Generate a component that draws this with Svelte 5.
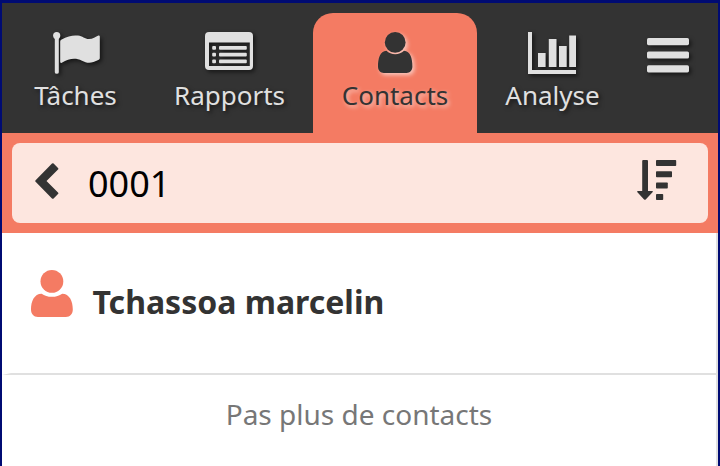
<script>
  const tabs = [
    { id: 'tasks', label: 'Tâches', width: 141 },
    { id: 'reports', label: 'Rapports', width: 167 },
    { id: 'contacts', label: 'Contacts', width: 164 },
    { id: 'stats', label: 'Analyse', width: 151 },
  ];
  let active = $state('contacts');
</script>

<div class="app">
  <nav>
    {#each tabs as tab}
      <button class="tab" class:active={active === tab.id} style="width: {tab.width}px" onclick={() => (active = tab.id)}>
        {#if tab.id === 'tasks'}
          <svg class="flag" width="47" height="42" viewBox="0 0 47 42">
            <circle cx="3.7" cy="3.6" r="3.6" />
            <path d="M1.8 4H5.8V40.3Q5.8 41.8 3.8 41.8T1.8 40.3Z" />
            <path d="M7.2 9.5Q7.2 8.4 8.2 7.8C15 4 20 3 25 3.6C29.5 4.2 32 7.2 36 7.1C39.5 7 43 4.5 45.4 3.5Q46.8 3.2 46.8 4.6V26.3Q46.8 27.2 45.8 27.8C38 31.9 34 31.3 29 28.7C22 25.2 16 26.6 8.8 30.7Q7.2 31.4 7.2 29.8Z" />
          </svg>
        {:else if tab.id === 'reports'}
          <svg class="list" width="48" height="42" viewBox="0 0 48 42">
            <path fill-rule="evenodd" d="M4 0H44Q48 0 48 4V34Q48 38 44 38H4Q0 38 0 34V4Q0 0 4 0ZM4 10.5V34H44.8V10.5Z" />
            {#each [14, 20.8, 27.5] as y}
              <rect x="7.2" {y} width="3.8" height="3.8" rx="1" />
              <rect x="14" {y} width="27.8" height="3.8" rx="1" />
            {/each}
          </svg>
        {:else if tab.id === 'contacts'}
          <svg width="34.4" height="42" viewBox="0 0 34.4 42">
            <circle cx="17.2" cy="10.4" r="10.4" />
            <path d="M8.4 18.8C10.7 21.1 13.8 22.3 17.2 22.3S23.7 21.1 26 18.8C32.4 19 34.4 26.5 34.4 34.6C34.4 38.5 31.8 41 28.6 41H5.8C2.6 41 0 38.5 0 34.6C0 26.5 2 19 8.4 18.8Z" />
          </svg>
        {:else}
          <svg class="chart" width="48" height="42" viewBox="0 0 48 42">
            <path d="M0 0H4V38H48V42H0ZM10 21H17.6V35H10ZM20.8 7H28.5V35H20.8ZM31 14H38.7V35H31ZM41.2 3.5H48V35H41.2Z" />
          </svg>
        {/if}
        <span>{tab.label}</span>
      </button>
    {/each}
    <button class="menu" aria-label="Menu">
      <svg width="42" height="35" viewBox="0 0 42 35">
        <rect width="42" height="7.2" rx="1.6" />
        <rect y="13.4" width="42" height="7.2" rx="1.6" />
        <rect y="27.2" width="42" height="7.2" rx="1.6" />
      </svg>
    </button>
  </nav>

  <header>
    <div class="search">
      <svg class="back" width="24" height="36" viewBox="0 0 24 36">
        <path d="M17 .6Q17.8-.2 18.6.6L23 4.9Q23.8 5.7 23 6.5L11.5 18L23 29.5Q23.8 30.3 23 31.1L18.6 35.4Q17.8 36.2 17 35.4L.6 18.8Q-.2 18 .6 17.2Z" />
      </svg>
      <span class="query">0001</span>
      <svg class="sort" width="40" height="41" viewBox="0 0 40 41">
        <path d="M6.2 0H10Q11 0 11 1V31H15.2Q16.5 31.2 15.5 32.3L8.7 39.4Q7.9 40.2 7.1 39.4L.4 32.3Q-.5 31.2 1 31H5.2V1Q5.2 0 6.2 0Z" />
        <rect x="19" y="0" width="20.2" height="6" rx=".8" />
        <rect x="19" y="11.3" width="16" height="6" rx=".8" />
        <rect x="19" y="22.5" width="11.8" height="6" rx=".8" />
        <rect x="19" y="34" width="7.2" height="6" rx=".8" />
      </svg>
    </div>
  </header>

  <main>
    <div class="row">
      <svg width="41.8" height="47" viewBox="0 0 41.8 47">
        <circle cx="20.9" cy="11.4" r="11.4" />
        <path d="M10.6 23.7C13.4 25.8 16.8 26.8 20.9 26.8S28.4 25.8 31.2 23.7C38.6 23.7 41.8 31.5 41.8 39.3C41.8 44 39.2 47 34.8 47H7C2.6 47 0 44 0 39.3C0 31.5 3.2 23.7 10.6 23.7Z" />
      </svg>
      <h4>Tchassoa marcelin</h4>
    </div>
    <p>Pas plus de contacts</p>
  </main>
</div>

<style>
  :global(body) { margin: 0; }
  .app {
    box-sizing: border-box;
    width: 720px;
    height: 466px;
    overflow: hidden;
    display: flex;
    flex-direction: column;
    border: solid #000b73;
    border-width: 3px 2px 0;
    background: #fff;
    font-family: "Noto Sans", sans-serif;
    color: #333;
  }
  svg { display: block; flex: none; fill: currentColor; }
  nav {
    box-sizing: border-box;
    height: 130px;
    flex: none;
    display: flex;
    align-items: flex-end;
    padding-left: 3px;
    background: #333;
  }
  button { border: 0; padding: 0; background: none; font: inherit; color: #e0e0e0; }
  .tab {
    box-sizing: border-box;
    height: 120px;
    padding-top: 19px;
    display: flex;
    flex-direction: column;
    align-items: center;
    border-radius: 20px 20px 0 0;
    font-size: 26px;
    line-height: 36px;
    text-shadow: 2px 2px 4px rgba(0, 0, 0, .6);
  }
  .tab svg, .menu svg { overflow: visible; filter: drop-shadow(2px 2px 2px rgba(0, 0, 0, .6)); }
  .tab .flag { margin-left: 1px; }
  .tab .list { margin-right: 1px; }
  .tab .chart { margin-right: 1px; overflow: hidden; }
  .tab span { margin-top: 3px; white-space: nowrap; }
  .tab.active { background: #f47b63; color: #333; text-shadow: 2px 2px 4px rgba(255, 255, 255, .6); }
  .tab.active svg { filter: drop-shadow(2px 2px 2px rgba(255, 255, 255, .6)); }
  .menu { height: 130px; padding: 35px 0 0 19px; display: flex; align-items: flex-start; }
  header { box-sizing: border-box; height: 100px; flex: none; padding: 10px; background: #f47b63; }
  .search {
    box-sizing: border-box;
    height: 80px;
    display: flex;
    align-items: flex-start;
    padding: 17px 31px 0 23px;
    border-radius: 8px;
    background: #fde6df;
  }
  .back { margin-top: 3px; }
  .query { flex: 1; margin-left: 29px; font-size: 36px; line-height: 48px; color: #000; }
  main { flex: 1; border-right: 2px solid #e0e0e0; }
  .row {
    box-sizing: border-box;
    height: 142px;
    display: flex;
    align-items: flex-start;
    padding: 37px 0 0 20px;
    border-bottom: 2px solid #e0e0e0;
    border-left: 9px solid transparent;
  }
  .row svg { color: #f47b63; }
  h4 { margin: 10px 0 0 19.6px; font-size: 32px; line-height: 44px; font-weight: 700; }
  p { margin: 19px 0 0; text-align: center; font-size: 28px; line-height: 40px; color: #777; }
</style>
